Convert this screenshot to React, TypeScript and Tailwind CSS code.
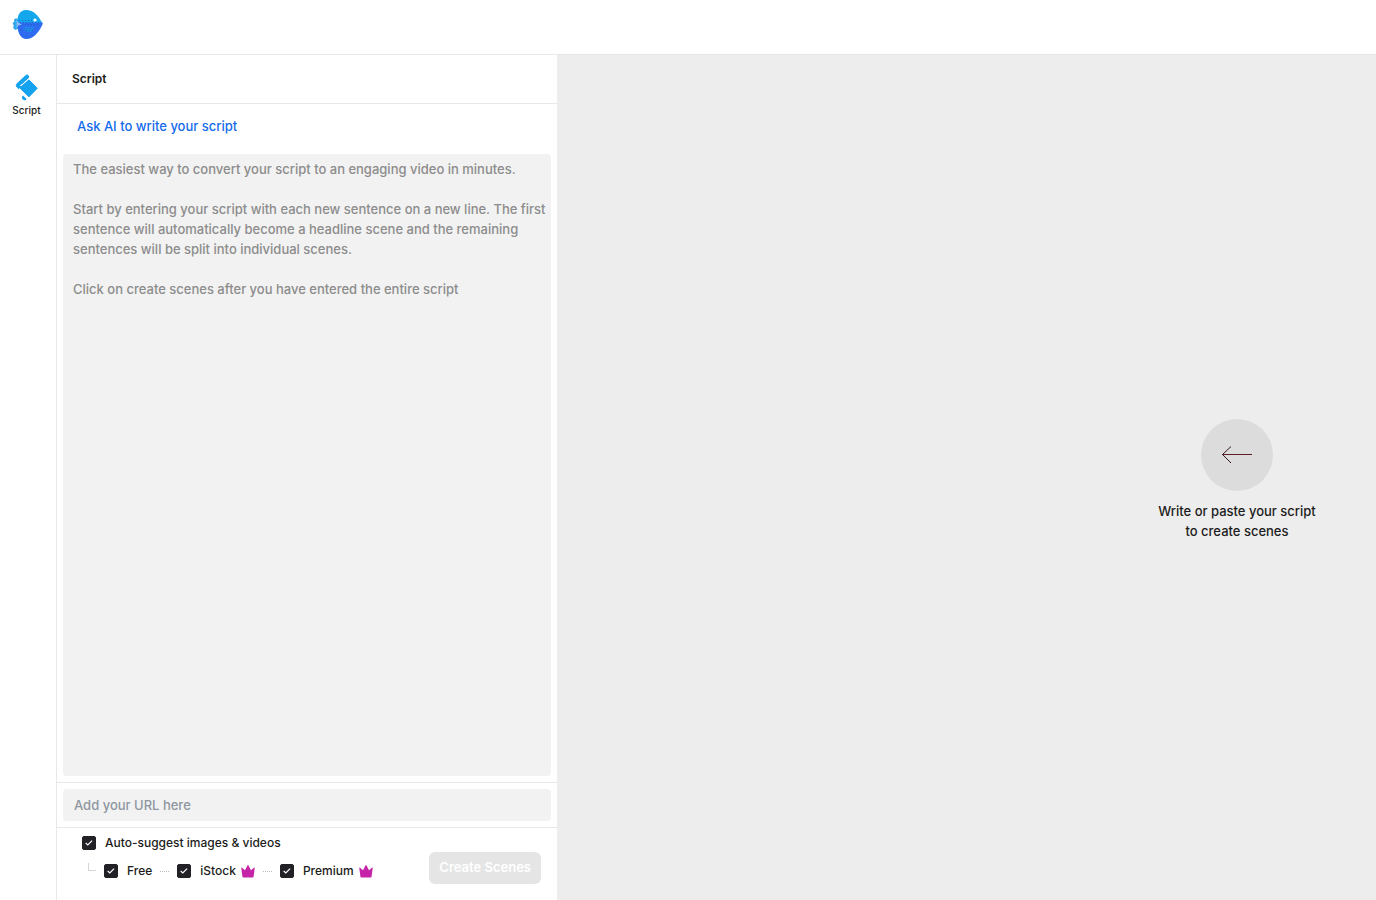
import { useState } from "react";

const placeholder = `The easiest way to convert your script to an engaging video in minutes.

Start by entering your script with each new sentence on a new line. The first sentence will automatically become a headline scene and the remaining sentences will be split into individual scenes.

Click on create scenes after you have entered the entire script`;

function Logo() {
  return (
    <svg width="32" height="32" viewBox="0 0 32 32" fill="none" aria-hidden="true">
      <path d="M8 12C6 10 3 10 3 12.5c0 .5.2 1 .5 1.5-2 0-2.5 2.500-.5 3-1.500 2-.5 5 2 4.800L8 20z" fill="#2FA8EE" />
      <path d="M6.300 14C6.300 7 9 2 15 2c8 0 12.500 6 16.300 13v1H6.300z" fill="#15A7EC" />
      <path d="M6.300 14.500h25c.6 1 .2 2-.4 3.200C27 25 22 31 15.500 31 9 31 6.300 24 6.300 14.500z" fill="#2E6BF0" />
      <path d="M5 11.500l2.500 3L11 16.500l-3.500 1-2.500 3c1-3 1-6 0-9z" fill="#8DBBF8" />
      <path d="M12.500 19h11c0 3-2.500 5-5.500 5s-5.500-2-5.500-5z" fill="#2388EC" />
      <path
        d="M8 12.500h14M9 14.500h20M11 16.500h16M13 20.500h10M15 22.500h7M9.500 22v1M11 26v1M15 28h1"
        stroke="#1B62C4"
        strokeDasharray="1 2"
      />
      <circle cx="24" cy="12" r="1.600" fill="#fff" />
    </svg>
  );
}

function ScriptIcon() {
  return (
    <svg width="24" height="28" viewBox="0 0 24 28" fill="none" aria-hidden="true">
      <path
        d="M13.500 5.500L22.300 14.200 14 22.800 4.500 13.700 3.500 14.700 2.200 13.400C1 12.100 1 10.600 2.200 9.400L4 8z"
        fill="#15A2EE"
        stroke="#15A2EE"
        strokeLinejoin="round"
      />
      <path d="M5.500 11.700L15.500 3" stroke="#fff" strokeWidth="1.500" />
      <path d="M6 8.300L12 2.800" stroke="#15A2EE" strokeWidth="4.200" strokeLinecap="round" />
      <path
        d="M8 21.600l3.600 3.300c-.6 1.600-2.500 1.900-3.800.7-1.300-1.200-1.200-3 .2-4z"
        fill="#15A2EE"
      />
    </svg>
  );
}

function CrownIcon() {
  return (
    <svg width="14" height="14" viewBox="0 0 14 14" aria-hidden="true">
      <path
        d="M1.400 12.600L.3 4.200c-.1-.6.4-.8.8-.4L4 6.300 6.500 1.400c.2-.4.8-.4 1 0L10 6.300l2.900-2.500c.4-.4.9-.2.8.4l-1.100 8.400c-.1.600-.4.900-1 .9H2.400c-.6 0-.9-.3-1-.9z"
        fill="#C624A8"
      />
    </svg>
  );
}

function ArrowLeft() {
  return (
    <svg width="32" height="20" viewBox="0 0 32 20" fill="none" stroke="#38171B" aria-hidden="true">
      <path d="M1.500 9.500H31" stroke="#5F1F27" />
      <path d="M10 1.500l-8.500 8 8.500 8.500" />
    </svg>
  );
}

type CheckOptionProps = {
  id: string;
  label: string;
};

function CheckOption({ id, label }: CheckOptionProps) {
  const [checked, setChecked] = useState(true);

  return (
    <div className="flex items-center gap-[9px]">
      <span className="relative flex">
        <input
          id={id}
          type="checkbox"
          checked={checked}
          onChange={(e) => setChecked(e.target.checked)}
          className="h-3.5 w-3.5 appearance-none rounded-xs border border-[#222226] bg-white checked:bg-[#222226]"
        />
        {checked && (
          <svg
            className="pointer-events-none absolute inset-0"
            width="14"
            height="14"
            viewBox="0 0 14 14"
            fill="none"
            stroke="#fff"
            strokeWidth="1.200"
          >
            <path d="M3.700 7l2.100 2 4.300-4.300" />
          </svg>
        )}
      </span>
      <label htmlFor={id} className="text-xs leading-5 font-medium">
        {label}
      </label>
    </div>
  );
}

function Dash() {
  return <span className="w-[9px] border-t border-dotted border-[#BDBDBD]" />;
}

function ScriptPanel() {
  const [script, setScript] = useState("");
  const [url, setUrl] = useState("");

  return (
    <section className="flex w-[500px] shrink-0 flex-col bg-white">
      <h1 className="border-b border-[#E8E8E8] px-[15px] py-3.5 text-xs leading-5 font-semibold">Script</h1>

      <div className="flex h-[50px] items-start px-5 pt-3">
        <button type="button" className="text-[13px] leading-5 font-medium text-[#146BEB]">
          Ask AI to write your script
        </button>
      </div>

      <div className="flex flex-1 flex-col px-1.5 pb-1.5">
        <textarea
          aria-label="Script"
          value={script}
          onChange={(e) => setScript(e.target.value)}
          placeholder={placeholder}
          className="w-full flex-1 resize-none rounded bg-[#F2F2F2] py-[5px] pr-1 pl-2.5 text-[13px] leading-5 font-medium outline-none placeholder:text-[#8C8C8C]"
        />
      </div>

      {/* Source URL */}
      <div className="border-y border-[#E8E8E8] p-1.5">
        <input
          type="url"
          aria-label="URL"
          value={url}
          onChange={(e) => setUrl(e.target.value)}
          placeholder="Add your URL here"
          className="block h-8 w-full rounded bg-[#F2F2F2] px-[11px] text-[13px] font-medium outline-none placeholder:text-[#8E969F]"
        />
      </div>

      {/* Media options */}
      <div className="flex items-start justify-between pr-4 pb-4 pl-[25px]">
        <div className="flex flex-col gap-2 pt-[5px]">
          <CheckOption id="auto-suggest" label="Auto-suggest images & videos" />
          <div className="flex items-center gap-2 pl-1.5">
            <span className="mb-2 h-2 w-2 border-b border-l border-[#D6D6D6]" />
            <CheckOption id="free" label="Free" />
            <Dash />
            <CheckOption id="istock" label="iStock" />
            <span className="-ml-[3px] flex">
              <CrownIcon />
            </span>
            <Dash />
            <CheckOption id="premium" label="Premium" />
            <span className="-ml-[3px] flex">
              <CrownIcon />
            </span>
          </div>
        </div>
        <button
          type="button"
          disabled
          className="mt-6 h-8 rounded-md bg-[#E5E5E5] px-2.5 text-[13px] font-semibold whitespace-nowrap text-white"
        >
          Create Scenes
        </button>
      </div>
    </section>
  );
}

export default function App() {
  return (
    <div className="flex min-h-screen flex-col bg-white font-['Inter',sans-serif] text-[#1C1C20]">
      <header className="flex border-b border-[#E8E8E8] px-[11px] pt-2 pb-3.5">
        <a href="#" aria-label="Home">
          <Logo />
        </a>
      </header>

      <div className="flex flex-1">
        <nav className="w-[57px] shrink-0 border-r border-[#E8E8E8] pt-[19px] pr-[3px]">
          <button type="button" className="flex w-full flex-col items-center text-[10px] leading-4 font-medium">
            <ScriptIcon />
            Script
          </button>
        </nav>

        <ScriptPanel />

        <main className="flex flex-1 justify-end bg-[#EDEDED]">
          <div className="flex w-[278px] flex-col items-center justify-center gap-2.5 pt-1">
            <div className="flex h-[72px] w-[72px] items-center justify-center rounded-full bg-[#DCDCDC]">
              <ArrowLeft />
            </div>
            <p className="text-center text-[13px] leading-5 font-medium">
              Write or paste your script
              <br />
              to create scenes
            </p>
          </div>
        </main>
      </div>
    </div>
  );
}
